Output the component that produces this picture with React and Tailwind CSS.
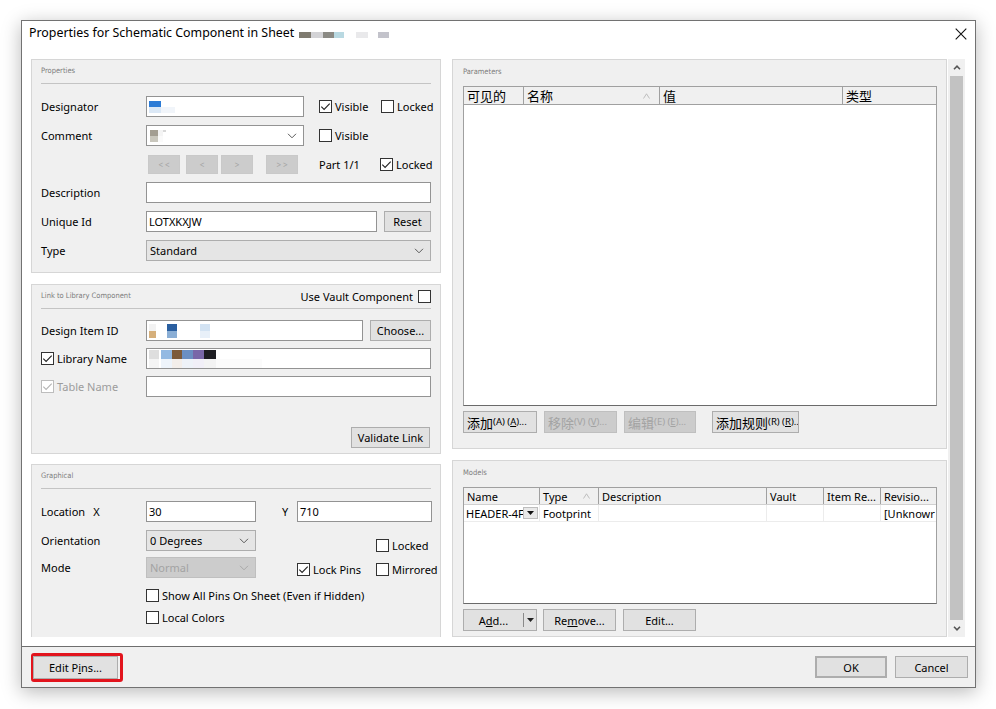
import React from "react";

const ui = "font-['Noto_Sans','Noto_Sans_CJK_SC',sans-serif]";
const cjk = "font-['Noto_Sans_CJK_SC',sans-serif]";

function Chevron({ color = "#5a5a5a" }) {
  return (
    <svg width="10" height="6" viewBox="0 0 10 6" className="shrink-0">
      <path d="M1 0.8l4 4 4-4" fill="none" stroke={color} strokeWidth="1" />
    </svg>
  );
}

function Check({ on, dim }) {
  return (
    <span
      className={`flex h-[13px] w-[13px] shrink-0 items-center justify-center border bg-white ${
        dim ? "border-[#bdbdbd]" : "border-[#333333]"
      }`}
    >
      {on && (
        <svg width="11" height="11" viewBox="0 0 11 11">
          <path
            d="M1.3 5.6 L4.1 8.4 L9.7 2.6"
            fill="none"
            stroke={dim ? "#b5b5b5" : "#222"}
            strokeWidth="1.1"
          />
        </svg>
      )}
    </span>
  );
}

function CheckLabel({ on, dim, children, className = "" }) {
  return (
    <div className={`flex shrink-0 items-center gap-[3px] whitespace-nowrap ${className}`}>
      <Check on={on} dim={dim} />
      <span className={dim ? "text-[#9c9c9c]" : ""}>{children}</span>
    </div>
  );
}

function Field({ className = "", children }) {
  return (
    <div className={`flex h-[21px] shrink-0 items-center overflow-hidden border border-[#939393] bg-white px-[2px] ${className}`}>
      {children}
    </div>
  );
}

function Select({ className = "", children, tone = "white" }) {
  const tones = {
    white: "border-[#939393] bg-white",
    gray: "border-[#adadad] bg-[#e5e5e5]",
    off: "border-[#bfbfbf] bg-[#cccccc] text-[#a3a3a3]",
  };
  return (
    <div className={`flex h-[21px] shrink-0 items-center justify-between border pl-[3px] pr-[6px] ${tones[tone]} ${className}`}>
      <div className="flex items-center">{children}</div>
      <Chevron color={tone === "off" ? "#a8a8a8" : "#5a5a5a"} />
    </div>
  );
}

function Btn({ className = "", children, off }) {
  return (
    <div
      className={`flex shrink-0 items-center justify-center whitespace-nowrap border ${
        off ? "border-[#bfbfbf] bg-[#cccccc] text-[#a3a3a3]" : "border-[#adadad] bg-[#e1e1e1]"
      } ${className}`}
    >
      {children}
    </div>
  );
}

function Row({ label, children, className = "h-[21px]" }) {
  return (
    <div className={`flex items-center ${className}`}>
      <div className="w-[105px] shrink-0 whitespace-nowrap">{label}</div>
      {children}
    </div>
  );
}

function Group({ title, right, divider = true, className = "", children }) {
  return (
    <section className={`flex flex-col border border-[#d6d6d6] bg-[#f0f0f0] px-[9px] ${className}`}>
      <div
        className={`flex h-[24px] shrink-0 items-center justify-between pb-[2px] ${
          divider ? "border-b border-[#c4c4c4]" : ""
        }`}
      >
        <span className="font-['DejaVu_Sans',sans-serif] text-[7.5px] font-stretch-condensed text-[#7c7c7c]">
          {title}
        </span>
        {right}
      </div>
      {children}
    </section>
  );
}

function Pix({ cols }) {
  return (
    <div className="flex">
      {cols.map(([w, top, bottom, h = 7], i) => (
        <div key={i} className="flex flex-col" style={{ width: w }}>
          <span style={{ height: h, background: top }} />
          <span style={{ height: h, background: bottom }} />
        </div>
      ))}
    </div>
  );
}

function SortMark() {
  return (
    <svg width="7" height="6" viewBox="0 0 7 6" className="shrink-0">
      <path d="M0.5 5.5 L3.5 0.8 L6.5 5.5" fill="none" stroke="#b8b8b8" strokeWidth="0.9" />
    </svg>
  );
}

function HeadCell({ w, children, last }) {
  return (
    <div
      className={`flex h-full shrink-0 items-center overflow-hidden whitespace-nowrap pl-[3px] ${
        last ? "" : "border-r border-[#a0a0a0]"
      }`}
      style={{ width: w }}
    >
      {children}
    </div>
  );
}

function PropertiesBox() {
  return (
    <Group title="Properties" className="h-[214px] shrink-0">
      <div className="mt-[12px] flex flex-col gap-[8px]">
        <Row label="Designator">
          <Field className="w-[158px]">
            <Pix cols={[[12, "#2b7bd6", "#dbe8f6", 6], [14, "transparent", "#f1f5fa", 6]]} />
          </Field>
          <CheckLabel on className="ml-[15px] w-[62px]">Visible</CheckLabel>
          <CheckLabel>Locked</CheckLabel>
        </Row>
        <Row label="Comment">
          <Select className="w-[158px]">
            <Pix cols={[[8, "#a39e92", "#c9c7bd", 6], [5, "#f4f4f4", "#fafafa", 6], [3, "#d8d8d8", "transparent", 2]]} />
          </Select>
          <CheckLabel className="ml-[15px]">Visible</CheckLabel>
        </Row>
        <Row label="" className="h-[20px]">
          <div className="ml-[2px] flex h-[19px] shrink-0 items-stretch text-[8px] text-[#a6a6a6]">
            <Btn off className="w-[32px] border-[#c9c9c9]">&lt; &lt;</Btn>
            <Btn off className="ml-[6px] w-[32px] border-[#c9c9c9]">&lt;</Btn>
            <Btn off className="ml-[3px] w-[32px] border-[#c9c9c9]">&gt;</Btn>
            <Btn off className="ml-[13px] w-[32px] border-[#c9c9c9]">&gt; &gt;</Btn>
          </div>
          <span className="ml-[21px] w-[61px] shrink-0">Part 1/1</span>
          <CheckLabel on>Locked</CheckLabel>
        </Row>
        <Row label="Description">
          <Field className="w-[285px]" />
        </Row>
        <Row label="Unique Id">
          <Field className="w-[231px]">LOTXKXJW</Field>
          <Btn className="ml-[7px] h-[21px] w-[47px]">Reset</Btn>
        </Row>
        <Row label="Type">
          <Select tone="gray" className="w-[285px]">Standard</Select>
        </Row>
      </div>
    </Group>
  );
}

function LinkBox() {
  return (
    <Group
      title="Link to Library Component"
      className="mt-[11px] h-[170px] shrink-0"
      right={
        <div className="flex items-center gap-[5px] pt-[2px]">
          <span>Use Vault Component</span>
          <Check />
        </div>
      }
    >
      <div className="mt-[11px] flex flex-col gap-[7px]">
        <Row label="Design Item ID">
          <Field className="w-[217px]">
            <Pix
              cols={[
                [7, "#f2f2f2", "#d5af7b", 7],
                [11, "transparent", "transparent", 7],
                [10, "#2a5fa0", "#8aaed5", 7],
                [23, "transparent", "transparent", 7],
                [10, "#d3e3f3", "#e8f0f9", 7],
              ]}
            />
          </Field>
          <Btn className="ml-[7px] h-[21px] w-[61px]">Choose...</Btn>
        </Row>
        <Row label={<CheckLabel on>Library Name</CheckLabel>}>
          <Field className="w-[285px]">
            <Pix
              cols={[
                [10, "#dedede", "#f4f4f4", 9],
                [2, "transparent", "transparent", 9],
                [11, "#93b9e2", "#eef4fb", 9],
                [10, "#7c5a3a", "#f3eeea", 9],
                [11, "#6b8fc2", "#eef2f8", 9],
                [11, "#7967a8", "#f1eff7", 9],
                [12, "#1d1d22", "#f3f3f3", 9],
                [46, "#ffffff", "#fbfbfb", 9],
              ]}
            />
          </Field>
        </Row>
        <Row label={<CheckLabel on dim>Table Name</CheckLabel>}>
          <Field className="w-[285px]" />
        </Row>
      </div>
      <Btn className="mt-[30px] mr-[1px] h-[21px] w-[79px] self-end">Validate Link</Btn>
    </Group>
  );
}

function GraphicalBox() {
  return (
    <Group title="Graphical" className="mt-[10px] flex-1 border-b-0">
      <div className="mt-[12px] flex flex-col">
        <Row label={<span>Location<span className="ml-[8px]">X</span></span>}>
          <Field className="w-[110px]">30</Field>
          <span className="ml-[26px] w-[15px] shrink-0">Y</span>
          <Field className="w-[135px]">710</Field>
        </Row>
        <Row label="Orientation" className="mt-[8px] h-[21px]">
          <Select tone="gray" className="w-[110px]">0 Degrees</Select>
          <CheckLabel className="ml-[120px] mb-[-2px] self-end">Locked</CheckLabel>
        </Row>
        <Row label="Mode" className="mt-[6px] h-[21px]">
          <Select tone="off" className="w-[110px]">Normal</Select>
          <CheckLabel on className="ml-[41px] mt-[3px] w-[79px]">Lock Pins</CheckLabel>
          <CheckLabel className="mt-[3px]">Mirrored</CheckLabel>
        </Row>
        <div className="mt-[9px] flex h-[16px] items-center pl-[105px]">
          <CheckLabel>Show All Pins On Sheet (Even if Hidden)</CheckLabel>
        </div>
        <div className="mt-[6px] flex h-[16px] items-center pl-[105px]">
          <CheckLabel>Local Colors</CheckLabel>
        </div>
      </div>
    </Group>
  );
}

function CnBtn({ cn, key1, off, className = "" }) {
  return (
    <Btn off={off} className={`h-[22px] justify-start overflow-hidden pl-[3px] ${className}`}>
      <span className={`${cjk} text-[13px] leading-none`}>{cn}</span>
      <span className="text-[9.5px] leading-none">
        ({key1}) (<span className="underline">{key1}</span>)..
        {cn.length < 3 ? "." : ""}
      </span>
    </Btn>
  );
}

function ParametersBox() {
  return (
    <Group title="Parameters" divider={false} className="h-[390px] shrink-0 pl-[10px]">
      <div className="mt-[2px] flex h-[320px] flex-col border border-[#a0a0a0] border-b-[#6a6a6a] bg-white">
        <div className={`flex h-[18px] shrink-0 border-b border-[#a0a0a0] bg-[#f0f0f0] text-[13px] ${cjk}`}>
          <HeadCell w={60}>可见的</HeadCell>
          <HeadCell w={136}>
            <span className="flex-1">名称</span>
            <span className="mr-[9px]">
              <SortMark />
            </span>
          </HeadCell>
          <HeadCell w={183}>值</HeadCell>
          <HeadCell w={92} last>
            类型
          </HeadCell>
        </div>
      </div>
      <div className="mt-[5px] flex items-center">
        <CnBtn cn="添加" key1="A" className="w-[74px]" />
        <CnBtn cn="移除" key1="V" off className="ml-[7px] w-[73px]" />
        <CnBtn cn="编辑" key1="E" off className="ml-[7px] w-[72px]" />
        <CnBtn cn="添加规则" key1="R" className="ml-[16px] w-[87px]" />
      </div>
    </Group>
  );
}

function ModelsBox() {
  const cells = [76, 59, 168, 57, 57, 55];
  return (
    <Group title="Models" divider={false} className="mt-[11px] flex-1 pl-[10px]">
      <div className="mt-[2px] flex h-[117px] flex-col border border-[#a0a0a0] border-b-[#6a6a6a] bg-white">
        <div className="flex h-[17px] shrink-0 border-b border-[#d0d0d0] bg-[#f0f0f0]">
          <HeadCell w={cells[0]}>Name</HeadCell>
          <HeadCell w={cells[1]}>
            <span className="flex-1">Type</span>
            <span className="mr-[8px]">
              <SortMark />
            </span>
          </HeadCell>
          <HeadCell w={cells[2]}>Description</HeadCell>
          <HeadCell w={cells[3]}>Vault</HeadCell>
          <HeadCell w={cells[4]}>Item Re...</HeadCell>
          <HeadCell w={cells[5]} last>
            Revisio...
          </HeadCell>
        </div>
        <div className="flex h-[17px] shrink-0 border-b border-[#ececec]">
          <div className="flex shrink-0 items-center border-r border-[#ececec] pl-[2px]" style={{ width: cells[0] }}>
            <span className="w-[57px] shrink-0 whitespace-nowrap">HEADER-4F</span>
            <span className="flex h-[12px] w-[15px] items-center justify-center border border-[#bdbdbd] bg-[#e8e8e8]">
              <svg width="7" height="4" viewBox="0 0 7 4">
                <path d="M0 0h7L3.5 4z" fill="#111" />
              </svg>
            </span>
          </div>
          <div className="flex shrink-0 items-center border-r border-[#ececec] pl-[3px]" style={{ width: cells[1] }}>
            Footprint
          </div>
          <div className="shrink-0 border-r border-[#ececec]" style={{ width: cells[2] }} />
          <div className="shrink-0 border-r border-[#ececec]" style={{ width: cells[3] }} />
          <div className="shrink-0 border-r border-[#ececec]" style={{ width: cells[4] }} />
          <div className="flex shrink-0 items-center whitespace-nowrap pl-[3px]" style={{ width: cells[5] }}>
            [Unknowr
          </div>
        </div>
      </div>
      <div className="mt-[5px] flex items-center">
        <Btn className="h-[22px] w-[74px]">
          <span className="w-[59px] text-center">
            A<span className="underline">d</span>d...
          </span>
          <span className="flex h-[14px] flex-1 items-center justify-center border-l border-[#8a8a8a]">
            <svg width="7" height="4" viewBox="0 0 7 4">
              <path d="M0 0h7L3.5 4z" fill="#222" />
            </svg>
          </span>
        </Btn>
        <Btn className="ml-[6px] h-[22px] w-[73px]">
          Re<span className="underline">m</span>ove...
        </Btn>
        <Btn className="ml-[7px] h-[22px] w-[73px]">Edit...</Btn>
      </div>
    </Group>
  );
}

function ScrollBar() {
  return (
    <div className="ml-[1px] flex w-[17px] shrink-0 flex-col bg-[#f0f0f0]">
      <div className="flex h-[17px] items-center justify-center">
        <svg width="8" height="5" viewBox="0 0 8 5">
          <path d="M1 4.2 L4 1.2 L7 4.2" fill="none" stroke="#555" strokeWidth="1.6" />
        </svg>
      </div>
      <div className="mx-[2px] flex-1 bg-[#c2c2c2]" />
      <div className="flex h-[17px] items-center justify-center">
        <svg width="8" height="5" viewBox="0 0 8 5">
          <path d="M1 0.8 L4 3.8 L7 0.8" fill="none" stroke="#555" strokeWidth="1.6" />
        </svg>
      </div>
    </div>
  );
}

export default function App() {
  return (
    <div className={`min-h-[709px] w-[996px] bg-white pl-[21px] pt-[20px] text-[11px] leading-[15px] text-black ${ui}`}>
      <div className="flex h-[668px] w-[955px] flex-col border border-[#727272] bg-white shadow-[0_4px_18px_rgba(0,0,0,0.28)]">
        {/* title bar */}
        <div className="flex h-[28px] shrink-0 items-start pl-[7px] pr-[8px] pt-[3px]">
          <span className="text-[12.4px] leading-[18px]">Properties for Schematic Component in Sheet</span>
          <div className="ml-[5px] mt-[8px] flex">
            <span className="h-[6px] w-[12px] bg-[#7f7b70]" />
            <span className="h-[6px] w-[12px] bg-[#d3d3d6]" />
            <span className="h-[6px] w-[11px] bg-[#8b8a84]" />
            <span className="h-[6px] w-[10px] bg-[#b9d9e2]" />
            <span className="ml-[12px] h-[6px] w-[12px] bg-[#e9e9eb]" />
            <span className="ml-[10px] h-[6px] w-[11px] bg-[#c3c3cb]" />
          </div>
          <svg width="12" height="12" viewBox="0 0 12 12" className="ml-auto mt-[4px]">
            <path d="M0.7 0.7 L11.3 11.3 M11.3 0.7 L0.7 11.3" stroke="#111" strokeWidth="1.1" />
          </svg>
        </div>

        {/* body */}
        <div className="mt-[10px] flex h-[578px] shrink-0 pl-[9px]">
          <div className="flex w-[410px] shrink-0 flex-col overflow-hidden">
            <PropertiesBox />
            <LinkBox />
            <GraphicalBox />
          </div>
          <div className="ml-[11px] flex w-[495px] shrink-0 flex-col overflow-hidden">
            <ParametersBox />
            <ModelsBox />
          </div>
          <ScrollBar />
        </div>

        {/* footer */}
        <div className="mt-[9px] flex flex-1 items-start border-t border-[#6e6e6e] bg-[#f0f0f0] pl-[9px] pr-[7px] pt-[6px]">
          <div className="flex h-[29px] w-[92px] items-start rounded-[3px] border-[3px] border-[#e2141d]">
            <Btn className="ml-[-1px] h-[23px] w-[85px]">
              Edit P<span className="underline">i</span>ns...
            </Btn>
          </div>
          <Btn className="ml-auto mt-[3px] h-[22px] w-[72px] border-2 border-[#0a74d6]">OK</Btn>
          <Btn className="ml-[8px] mt-[3px] h-[22px] w-[73px]">Cancel</Btn>
        </div>
      </div>
    </div>
  );
}
